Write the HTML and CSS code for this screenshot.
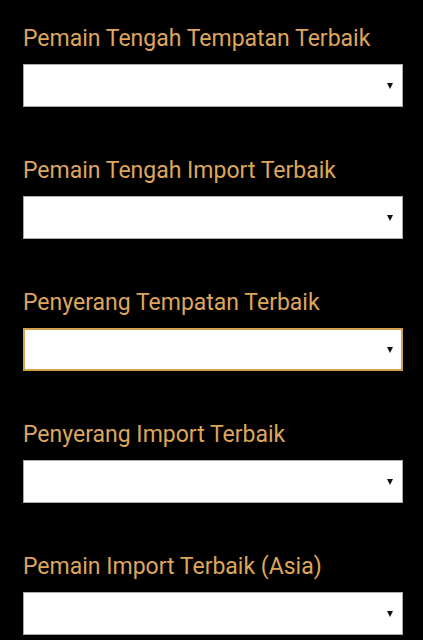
FILE: index.html
```html
<!DOCTYPE html>
<html>
<head>
<meta charset="utf-8">
<link rel="stylesheet" href="styles.css">
</head>
<body>
<div class="form">
  <div class="field">
    <label class="label">Pemain Tengah Tempatan Terbaik</label>
    <div class="select"><span class="arrow"></span></div>
  </div>
  <div class="field">
    <label class="label">Pemain Tengah Import Terbaik</label>
    <div class="select"><span class="arrow"></span></div>
  </div>
  <div class="field">
    <label class="label">Penyerang Tempatan Terbaik</label>
    <div class="select focused"><span class="arrow"></span></div>
  </div>
  <div class="field">
    <label class="label">Penyerang Import Terbaik</label>
    <div class="select"><span class="arrow"></span></div>
  </div>
  <div class="field">
    <label class="label">Pemain Import Terbaik (Asia)</label>
    <div class="select"><span class="arrow"></span></div>
  </div>
</div>
</body>
</html>
```
FILE: styles.css
```css
html, body {
  margin: 0;
  padding: 0;
  background: #000;
}
body {
  font-family: Roboto, "Noto Sans", sans-serif;
  overflow: hidden;
}
.form {
  display: flex;
  flex-direction: column;
  gap: 50px;
  padding: 25px 20px 0 23px;
}
.field {
  display: flex;
  flex-direction: column;
  gap: 11px;
}
.label {
  display: block;
  color: #dea65c;
  font-size: 23px;
  line-height: 28px;
}
.select {
  box-sizing: border-box;
  height: 43px;
  width: 380px;
  background: #fff;
  border: 1px solid #a9a9a9;
  display: flex;
  align-items: center;
  justify-content: flex-end;
  padding-right: 9px;
}
.select.focused {
  border: 2px solid #d4a24c;
  padding-right: 8px;
}
.arrow {
  width: 0;
  height: 0;
  border-left: 3.5px solid transparent;
  border-right: 3.5px solid transparent;
  border-top: 6px solid #111;
  margin-top: 1px;
}
```
